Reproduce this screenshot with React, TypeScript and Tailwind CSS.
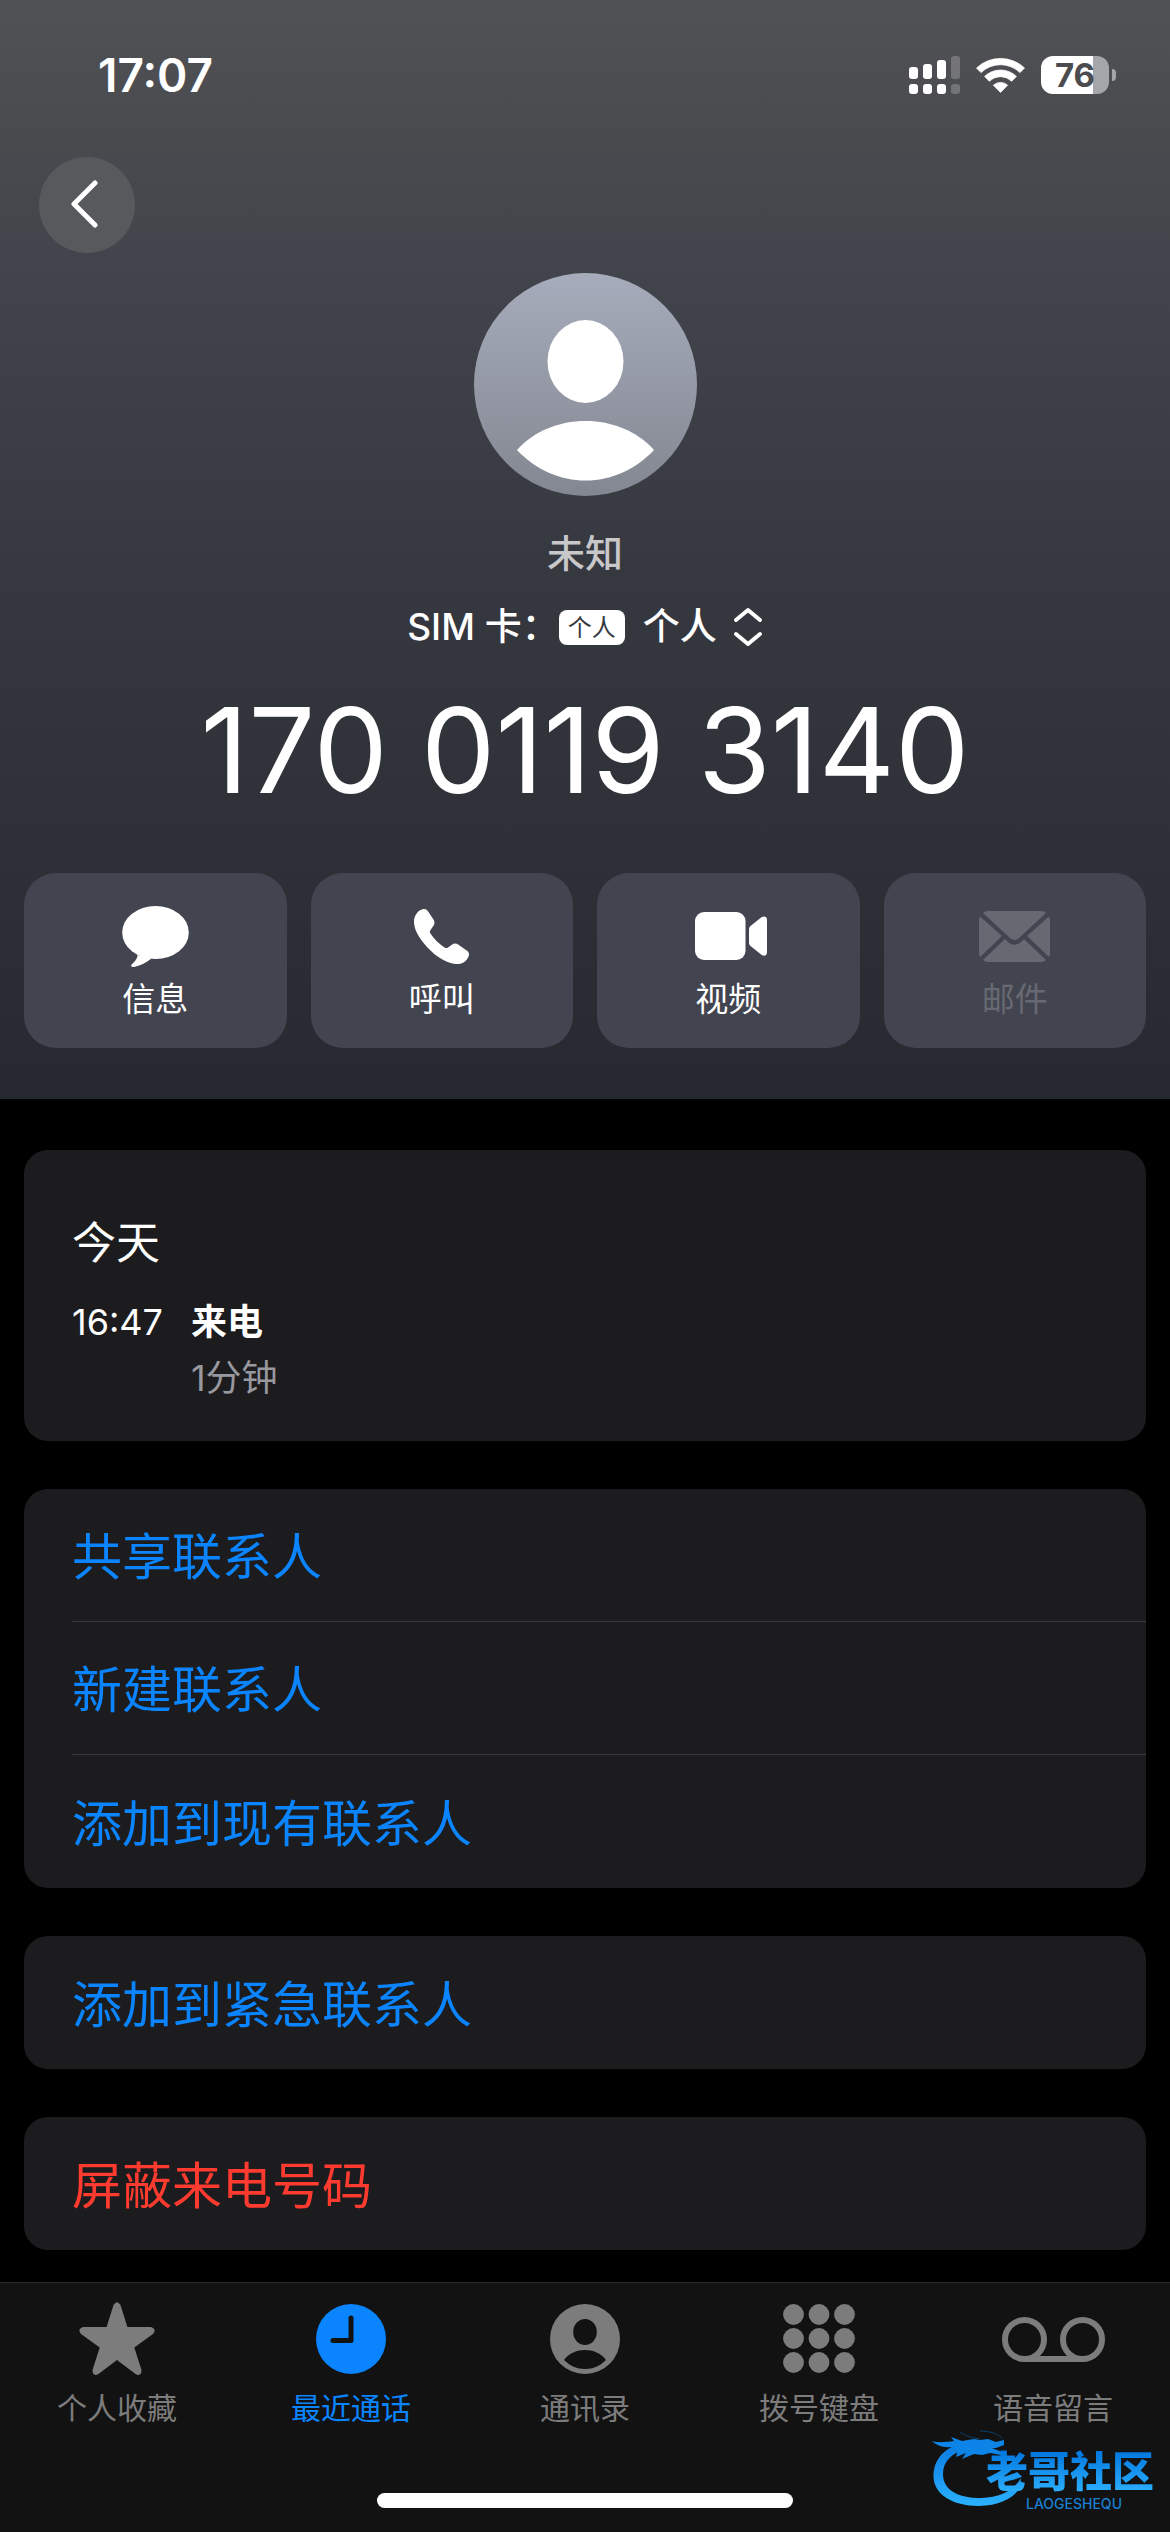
import React, { useState } from 'react';

const BubbleIcon = () => (
  <svg width="67" height="61" viewBox="0 0 67 61" fill="currentColor">
    <ellipse cx="33.5" cy="26.5" rx="33.3" ry="26.5" />
    <path d="M15.5 49C15.5 53.5 11 57 9.6 58.6C8.4 60.4 9.6 61.2 12 61C18 60 24 56.5 29.5 52.5Z" />
  </svg>
);

const PhoneIcon = () => (
  <svg width="55" height="55" viewBox="0 0 55 55" fill="currentColor">
    <path d="M3 4C5.5 1 8 0 10 0C12 0 13.2 1 14.5 3L19.5 10.5C21 13 20.8 15 19 17.5L16.5 21C15.7 22.3 15.7 23.3 16.5 24.5C20 30 25 35 30.5 38.5C31.7 39.3 32.7 39.3 34 38.4L37.5 36C40 34.2 42 34.2 44.5 35.8L52 41C54.2 42.5 55 43.5 55 45.5C55 47.5 53.5 50 51 52.5C48.5 54.5 46 55 43 55C34 55 22 48 13 38C4 28 0 20 0 12.5C0 9 1 6.5 3 4Z" />
  </svg>
);

const VideoIcon = () => (
  <svg width="78" height="48" viewBox="-6 0 78 48" fill="currentColor">
    <rect width="50.5" height="48" rx="9" />
    <path d="M54 17.5C54 16 54.5 15 55.5 14L65.5 6C66.8 5 68 4.5 69 4.5C71 4.5 72 6 72 8V40C72 42.3 71 43.8 69 43.8C68 43.8 66.8 43 65.5 42L55.5 34C54.5 33 54 32 54 30.5Z" />
  </svg>
);

const MailIcon = () => (
  <svg width="71" height="51" viewBox="0 0 71 51" fill="currentColor">
    <path d="M4 2Q6 0 9 0H62Q65 0 67 2L40 27Q35.5 31 31 27Z" />
    <path d="M0 9Q0 7 1 5.5L23 25L1 46Q0 44 0 42Z" />
    <path d="M71 9Q71 7 70 5.5L48 25L70 46Q71 44 71 42Z" />
    <path d="M4 49L26 28L29.5 31.5Q35.5 36 41.5 31.5L45 28L67 49Q65 51 62 51H9Q6 51 4 49Z" />
  </svg>
);

const StarIcon = () => (
  <svg width="76" height="74" viewBox="0 0 76 74" fill="currentColor">
    <path d="M34.6 2.8Q38 -2.5 41.4 2.8L48.4 25H72Q78 27 74 32L55.3 45.5L62.5 68Q62.5 75 56.5 72L38 58L19.5 72Q13.5 75 13.5 68L20.7 45.5L2 32Q-2 27 4 25H27.6Z" />
  </svg>
);

const ClockIcon = () => (
  <svg width="70" height="70" viewBox="0 0 70 70">
    <circle cx="35" cy="35" r="35" fill="currentColor" />
    <path d="M35 14V36.5H17" fill="none" stroke="#121212" strokeWidth="5" strokeLinecap="round" strokeLinejoin="round" />
  </svg>
);

const PersonIcon = () => (
  <svg width="70" height="70" viewBox="0 0 70 70">
    <circle cx="35" cy="35" r="35" fill="currentColor" />
    <ellipse cx="35" cy="28" rx="11.8" ry="13" fill="#121212" />
    <path d="M14 56C19 49 27 46 35 46C43 46 51 49 56 56C50 62 43 65 35 65C27 65 20 62 14 56Z" fill="#121212" />
  </svg>
);

const KeypadIcon = () => (
  <svg width="72" height="70" viewBox="0 0 72 70" fill="currentColor">
    {[10.5, 34.5, 58.5].map(y => [10.5, 36, 61.5].map(x => <circle key={`${x}-${y}`} cx={x} cy={y} r="10.4" />))}
  </svg>
);

const VoicemailIcon = () => (
  <svg width="103" height="45" viewBox="0 0 103 45" fill="none" stroke="currentColor" strokeWidth="6">
    <circle cx="22.5" cy="22.5" r="19.5" />
    <circle cx="80.5" cy="22.5" r="19.5" />
    <path d="M22.5 42H80.5" />
  </svg>
);

const Avatar = () => (
  <svg className="mt-5" width="223" height="223" viewBox="0 0 223 223">
    <defs>
      <linearGradient id="avatar" x1="0" y1="0" x2="0" y2="1">
        <stop offset="0" stopColor="#a6acbb" />
        <stop offset="1" stopColor="#838791" />
      </linearGradient>
    </defs>
    <circle cx="111.5" cy="111.5" r="111.5" fill="url(#avatar)" />
    <ellipse cx="111.5" cy="88.5" rx="38" ry="41.5" fill="#fff" />
    <path d="M43 177C60 158 85 148 111.5 148C138 148 163 158 180 177C161 197 137 207.5 111.5 207.5C86 207.5 62 197 43 177Z" fill="#fff" />
  </svg>
);

function StatusBar() {
  return (
    <div className="flex h-[157px] items-center justify-between pr-[54px] pb-2 pl-[98px]">
      <span className="text-[46px] leading-[54px] font-semibold">17:07</span>
      <div className="flex items-center">
        <svg width="51" height="38" viewBox="0 0 51 38" fill="#fff">
          <rect x="0" y="11" width="9" height="12" rx="3" />
          <rect x="14" y="8" width="9" height="15" rx="3" />
          <rect x="28" y="4" width="9" height="19" rx="3" />
          <rect x="42" y="0" width="9" height="23" rx="3" opacity="0.22" />
          <rect x="0" y="28" width="9" height="10" rx="3" />
          <rect x="14" y="28" width="9" height="10" rx="3" />
          <rect x="28" y="28" width="9" height="10" rx="3" />
          <rect x="42" y="28" width="9" height="10" rx="3" opacity="0.22" />
        </svg>
        <svg className="ml-4" width="49" height="36" viewBox="0 0 49 36" fill="#fff" stroke="#fff" strokeWidth="0.8" strokeLinejoin="round">
          <path d="M0.5 11A35 35 0 0 1 48.5 11L44 15.6A28 28 0 0 0 5 15.6Z" />
          <path d="M8.6 19.4A23 23 0 0 1 40.4 19.4L35.7 24.2A16 16 0 0 0 13.3 24.2Z" />
          <path d="M17.4 28.2A10.5 10.5 0 0 1 31.6 28.2L24.5 35.4Z" />
        </svg>
        <div className="ml-4 flex h-[38px] w-[68px] items-center justify-center rounded-xl bg-[linear-gradient(to_right,#ffffff_76%,#a5a6a9_76%)] text-[33px] leading-[38px] font-bold text-[#4b4c50]">
          76
        </div>
        <div className="ml-[3px] h-3 w-1 rounded-r-full bg-[#a5a6a9]" />
      </div>
    </div>
  );
}

const actions = [
  { label: '信息', icon: <BubbleIcon /> },
  { label: '呼叫', icon: <PhoneIcon /> },
  { label: '视频', icon: <VideoIcon /> },
  { label: '邮件', icon: <MailIcon />, disabled: true },
];

const groups = [
  { color: 'text-[#0a84ff]', rows: ['共享联系人', '新建联系人', '添加到现有联系人'] },
  { color: 'text-[#0a84ff]', rows: ['添加到紧急联系人'] },
  { color: 'text-[#ff3b30]', rows: ['屏蔽来电号码'] },
];

const tabs = [
  { label: '个人收藏', icon: <StarIcon /> },
  { label: '最近通话', icon: <ClockIcon /> },
  { label: '通讯录', icon: <PersonIcon /> },
  { label: '拨号键盘', icon: <KeypadIcon /> },
  { label: '语音留言', icon: <VoicemailIcon /> },
];

function Watermark() {
  return (
    <div className="pointer-events-none absolute right-4 bottom-5 h-[84px] w-[224px]">
      <svg width="224" height="84" viewBox="0 0 224 84">
        <defs>
          <linearGradient id="dragon" x1="0" y1="0" x2="0" y2="1">
            <stop offset="0" stopColor="#0a7be0" />
            <stop offset="1" stopColor="#2bb0ff" />
          </linearGradient>
        </defs>
        <path
          fill="url(#dragon)"
          d="M30 16C14 20 3.5 32 3.5 48C3.5 66 22 78 49 78C70 78 86 69 90 59L91 50C84 62 70 70 51 70C28 70 13 62 13 46C13 33 22 25 36 21Z"
        />
        <path
          fill="#0d84e8"
          d="M2 13C8 15 16 14 24 13L21 9L32 13L44 11L50 12L58 11L66 14L74 12L74 17L66 20L62 20L72 24L71 27L60 25L52 27L44 26L32 31L36 25L26 29L28 22L20 19C14 20 6 17 2 13Z"
        />
        <path d="M30 4C36 8 42 10 50 11M50 3C60 3 69 6 73 11" fill="none" stroke="#0b3f6b" strokeWidth="1" />
      </svg>
      <div className="absolute right-0 bottom-0 flex flex-col">
        <span className="bg-linear-to-b from-[#0072dc] to-[#2fb4ff] bg-clip-text text-[42px] leading-[48px] font-black text-transparent">老哥社区</span>
        <span className="pl-10 text-[14px] leading-4 font-medium text-[#1a7fd0]">LAOGESHEQU</span>
      </div>
    </div>
  );
}

export default function App() {
  const [activeTab, setActiveTab] = useState('最近通话');

  return (
    <div className="relative flex min-h-screen flex-col bg-black font-['Inter','Noto_Sans_CJK_SC',sans-serif] text-white">
      <header className="bg-[linear-gradient(to_bottom,#515256_0%,#484a4e_13%,#42444c_25%,#363840_53%,#2e3038_78%,#272931_100%)] pb-[51px]">
        <StatusBar />
        <button aria-label="返回" className="ml-[39px] flex size-24 items-center justify-center rounded-full bg-[#58595d]">
          <svg className="mr-1" width="30" height="50" viewBox="0 0 30 50" fill="none" stroke="#fff" strokeWidth="5" strokeLinecap="round" strokeLinejoin="round">
            <path d="M25 3L4 24L25 45" />
          </svg>
        </button>

        <div className="flex flex-col items-center">
          <Avatar />
          <div className="mt-8 text-[38px] leading-[50px] font-medium text-[#c8c8ca]">未知</div>
          <button className="mt-[22px] flex h-[54px] items-center text-[37px] leading-[54px] font-medium">
            <span>SIM 卡：</span>
            <span className="flex h-[35px] w-[66px] items-center justify-center rounded-lg bg-white text-[24px] leading-[35px] font-normal text-[#36383f]">个人</span>
            <span className="ml-[18px]">个人</span>
            <svg className="ml-4" width="30" height="40" viewBox="0 0 30 40" fill="none" stroke="#fff" strokeWidth="4" strokeLinecap="round" strokeLinejoin="round">
              <path d="M3 13L15 3L27 13M3 27L15 37L27 27" />
            </svg>
          </button>
          <a href="tel:17001193140" className="mt-9 text-[118px] leading-[120px]">170 0119 3140</a>
        </div>

        <div className="mt-[63px] grid grid-cols-4 gap-6 px-6">
          {actions.map(a => (
            <button
              key={a.label}
              disabled={a.disabled}
              className="flex h-[175px] flex-col items-center rounded-[32px] bg-[#42444f] pt-8 disabled:text-[#676972]"
            >
              <span className="flex h-[62px] items-center">{a.icon}</span>
              <span className="mt-2 text-[33px] leading-[48px]">{a.label}</span>
            </button>
          ))}
        </div>
      </header>

      <main className="flex flex-1 flex-col gap-12 px-6 pt-[51px] pb-8">
        <section className="rounded-3xl bg-[#1c1c1e] px-12 pt-[66px] pb-[35px]">
          <h2 className="text-[44px] leading-[54px]">今天</h2>
          <div className="mt-6 flex gap-7 text-[36px] leading-[56px]">
            <time>16:47</time>
            <div>
              <div className="font-semibold">来电</div>
              <div className="text-[#98989f]">1分钟</div>
            </div>
          </div>
        </section>

        {groups.map(g => (
          <section key={g.rows[0]} className="rounded-3xl bg-[#1c1c1e] pl-12">
            {g.rows.map(row => (
              <button
                key={row}
                className={`flex h-[133px] w-full items-center border-b border-[#38383a] pt-1 text-left text-[50px] leading-[60px] last:border-b-0 ${g.color}`}
              >
                {row}
              </button>
            ))}
          </section>
        ))}
      </main>

      <nav className="flex h-[250px] flex-col items-center border-t border-[#2a2a2a] bg-[#121212] pb-6">
        <div className="grid w-full flex-1 grid-cols-5">
          {tabs.map(t => (
            <button
              key={t.label}
              onClick={() => setActiveTab(t.label)}
              className={`flex flex-col items-center pt-4 ${t.label === activeTab ? 'text-[#0a84ff]' : 'text-[#7c7c7c]'}`}
            >
              <span className="flex h-20 items-center">{t.icon}</span>
              <span className="mt-2 text-[30px] leading-[42px]">{t.label}</span>
            </button>
          ))}
        </div>
        <div className="h-[15px] w-[416px] rounded-full bg-white" />
      </nav>

      <Watermark />
    </div>
  );
}
